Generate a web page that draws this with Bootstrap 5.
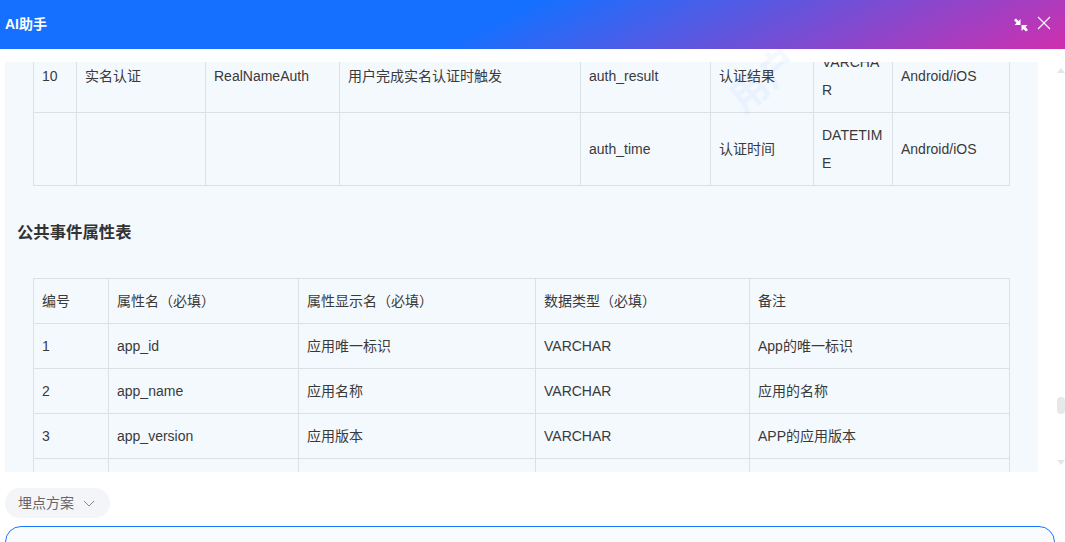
<!DOCTYPE html>
<html lang="zh">
<head>
<meta charset="utf-8">
<link href="https://cdn.jsdelivr.net/npm/bootstrap@5.3.0/dist/css/bootstrap.min.css" rel="stylesheet">
<style>
html,body{height:542px;overflow:hidden;background:#fff;}
body{font-family:"Liberation Sans","Noto Sans CJK SC",sans-serif;font-size:14px;color:#3a3a3a;position:relative;}
.ai-head{height:49px;padding:0 14px 0 5px;background:linear-gradient(155deg,#1570ff 0%,#1570ff 46%,#cf2fae 100%);color:#fff;position:relative;z-index:3;}
.ai-title{font-size:14px;font-weight:700;}
.ai-actions{gap:9px;}
.ai-close{margin-bottom:3px;}
.ai-body{height:410px;margin-top:13px;}
.ai-panel{width:1033px;margin-left:5px;background:#f4f9fe;overflow:hidden;position:relative;}
.ai-scroll-inner{margin-top:-23px;padding:0 28px;}
.ai-table{border-collapse:collapse;table-layout:fixed;}
.ai-table td{border:1px solid #dcdfe3;padding:8px;line-height:28px;vertical-align:middle;word-break:break-all;color:#3a3a3a;}
.ai-h{font-size:16.38px;font-weight:700;color:#333;margin:34px 0 34px -16px;line-height:24px;}
.ai-track{width:8px;margin-left:19px;position:relative;}
.ai-rail{width:8px;height:100%;padding:6px 0 7px;}
.tri-up,.tri-down{width:0;height:0;border-left:4px solid transparent;border-right:4px solid transparent;}
.tri-up{border-bottom:5px solid #e6e6e6;}
.tri-down{border-top:5px solid #e6e6e6;}
.ai-thumb{position:absolute;left:0;top:335px;width:8px;height:17px;border-radius:4px;background:#e8e8e8;}
.ai-chip{margin:16px 0 8px 5px;width:105px;height:30px;border-radius:15px;background:#f4f5f9;color:#666;padding:1px 0 0 13px;gap:9px;}
.ai-input{margin:0 10px 0 5px;height:60px;border:1px solid #1677ff;border-radius:16px;background:#fafbfd;}
.ai-mark{position:absolute;left:726px;top:58px;transform:rotate(-41deg);font-size:38px;font-weight:700;line-height:44px;color:#1677ff;opacity:.045;white-space:nowrap;pointer-events:none;z-index:2;}
</style>
</head>
<body>
<div class="ai-head d-flex align-items-center justify-content-between">
  <span class="ai-title">AI助手</span>
  <div class="ai-actions d-flex align-items-center">
    <svg width="14" height="14" viewBox="0 0 14 14" fill="#fff"><path d="M0 2 2 0.500 4.500 3 6.500 1V7H0.500L2.500 5Z"/><path d="M14 12 12 13.500 9.500 11 7.500 13V7H13.500L11.500 9Z"/></svg>
    <svg class="ai-close" width="14" height="14" viewBox="0 0 14 14" fill="none" stroke="#fff" stroke-width="1.1"><path d="M1 1 13 13M13 1 1 13"/></svg>
  </div>
</div>
<div class="ai-mark">用户</div>
<div class="ai-body d-flex">
  <div class="ai-panel">
    <div class="ai-scroll-inner">
      <table class="ai-table" style="width:976px">
        <colgroup><col style="width:43px"><col style="width:129px"><col style="width:134px"><col style="width:241px"><col style="width:130px"><col style="width:103px"><col style="width:79px"><col style="width:117px"></colgroup>
        <tr><td>10</td><td>实名认证</td><td>RealNameAuth</td><td>用户完成实名认证时触发</td><td>auth_result</td><td>认证结果</td><td>VARCHAR</td><td>Android/iOS</td></tr>
        <tr><td></td><td></td><td></td><td></td><td>auth_time</td><td>认证时间</td><td>DATETIME</td><td>Android/iOS</td></tr>
      </table>
      <h2 class="ai-h">公共事件属性表</h2>
      <table class="ai-table" style="width:976px">
        <colgroup><col style="width:75px"><col style="width:190px"><col style="width:237px"><col style="width:214px"><col style="width:260px"></colgroup>
        <tr><td>编号</td><td>属性名（必填）</td><td>属性显示名（必填）</td><td>数据类型（必填）</td><td>备注</td></tr>
        <tr><td>1</td><td>app_id</td><td>应用唯一标识</td><td>VARCHAR</td><td>App的唯一标识</td></tr>
        <tr><td>2</td><td>app_name</td><td>应用名称</td><td>VARCHAR</td><td>应用的名称</td></tr>
        <tr><td>3</td><td>app_version</td><td>应用版本</td><td>VARCHAR</td><td>APP的应用版本</td></tr>
        <tr><td>&nbsp;</td><td></td><td></td><td></td><td></td></tr>
      </table>
    </div>
  </div>
  <div class="ai-track">
    <div class="ai-rail d-flex flex-column justify-content-between align-items-center"><div class="tri-up"></div><div class="tri-down"></div></div>
    <div class="ai-thumb"></div>
  </div>
</div>
<div class="ai-chip d-flex align-items-center"><span>埋点方案</span>
  <svg width="12" height="8" viewBox="0 0 12 8" fill="none" stroke="#888" stroke-width="1"><path d="M1 1 6 6 11 1"/></svg>
</div>
<div class="ai-input"></div>
</body>
</html>
